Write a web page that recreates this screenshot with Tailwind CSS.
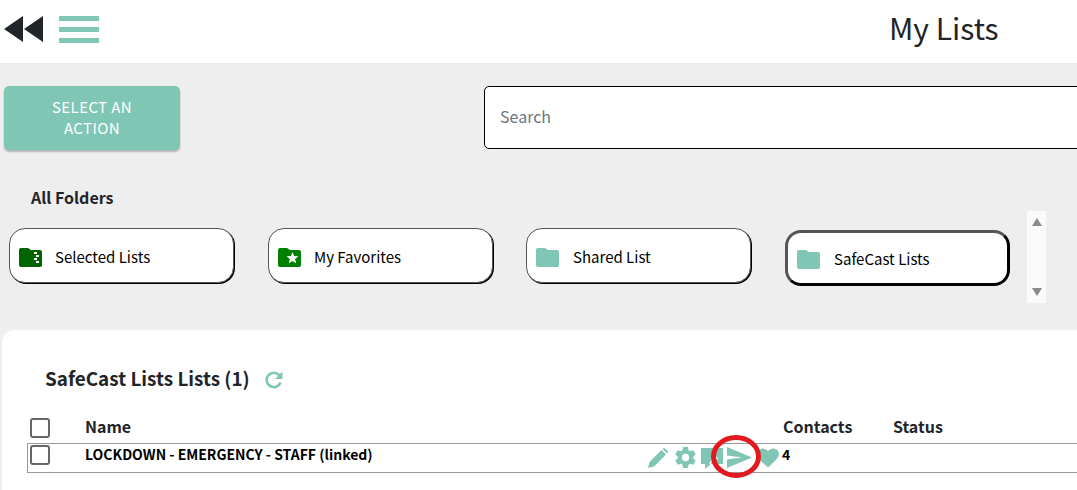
<!DOCTYPE html>
<html lang="en">

<head>
  <meta charset="UTF-8">
  <title>My Lists</title>
  <script src="https://cdn.jsdelivr.net/npm/@tailwindcss/browser@4"></script>
</head>

<body class="bg-[#eeeeee] h-[490px] overflow-hidden font-['Noto_Sans_CJK_SC','Liberation_Sans',sans-serif] text-[#212529]">

  <!-- header -->
  <div class="bg-white h-[63px] flex items-center pl-1 relative">
    <svg width="40" height="28" viewBox="0 0 40 28" class="mt-[-5px]"><path d="M0 14 19 1V27Z M20 14 39 1V27Z" fill="#212529"/></svg>
    <div class="ml-[15px] w-[40px] flex flex-col gap-[6px] mt-[-5px]">
      <div class="h-[5px] bg-[#80c6b5]"></div>
      <div class="h-[5px] bg-[#80c6b5]"></div>
      <div class="h-[5px] bg-[#80c6b5]"></div>
    </div>
    <h1 class="ml-[790px] text-[30px] leading-none mt-[-10px] whitespace-nowrap">My Lists</h1>
  </div>

  <!-- actions + search -->
  <div class="flex pl-1 pt-[23px]">
    <button class="w-[176px] h-[64px] shrink-0 bg-[#80c6b5] rounded-[5px] shadow-[0_2px_2px_rgba(0,0,0,0.25)] text-white text-[15px] leading-[21px] tracking-[0.4px] px-10 pb-[2px]">SELECT AN ACTION</button>
    <div class="ml-[304px] w-[620px] h-[63px] bg-white border border-black rounded-[5px] flex items-center pl-[15px] pb-[3px] text-[16px] text-[#6c757d] shrink-0">Search</div>
  </div>

  <div class="pl-[31px] pt-[35px] font-bold text-[16px] leading-6">All Folders</div>

  <!-- folders -->
  <div class="flex items-start pl-[9px] pt-[15px]">
    <div class="w-[225px] h-[55px] bg-white rounded-[16px] border border-[#555] shadow-[1px_1px_0_#000] flex items-center pl-[9px] pt-[3px] text-[15px] text-black mt-[4px]">
      <svg width="23" height="19" viewBox="0 0 23 19"><path d="M2 0H9L12 2H21A2 2 0 0 1 23 4V17A2 2 0 0 1 21 19H2A2 2 0 0 1 0 17V2A2 2 0 0 1 2 0Z" fill="#006400"/><path d="M15 4h3v2h-3zM17 7h3v2h-3zM15 10h3v2h-3zM17 13h3v2h-3z" fill="#fff"/></svg>
      <span class="ml-[13px]">Selected Lists</span>
    </div>
    <div class="ml-[34px] w-[225px] h-[55px] bg-white rounded-[16px] border border-[#555] shadow-[1px_1px_0_#000] flex items-center pl-[9px] pt-[3px] text-[15px] text-black mt-[4px]">
      <svg width="23" height="19" viewBox="0 0 23 19"><path d="M2 0H9L12 2H21A2 2 0 0 1 23 4V17A2 2 0 0 1 21 19H2A2 2 0 0 1 0 17V2A2 2 0 0 1 2 0Z" fill="#008000"/><path d="M14.500 4 16.100 8 20.400 8.300 17.100 11 18.200 15.200 14.500 12.900 10.800 15.200 11.900 11 8.600 8.300 12.900 8Z" fill="#fff"/></svg>
      <span class="ml-[13px]">My Favorites</span>
    </div>
    <div class="ml-[33px] w-[225px] h-[55px] bg-white rounded-[16px] border border-[#555] shadow-[1px_1px_0_#000] flex items-center pl-[9px] pt-[3px] text-[15px] text-black mt-[4px]">
      <svg width="23" height="19" viewBox="0 0 23 19"><path d="M2 0H9L12 2H21A2 2 0 0 1 23 4V17A2 2 0 0 1 21 19H2A2 2 0 0 1 0 17V2A2 2 0 0 1 2 0Z" fill="#80c6b5"/></svg>
      <span class="ml-[14px]">Shared List</span>
    </div>
    <div class="ml-[34px] w-[225px] h-[56px] bg-white rounded-[16px] border-[3px] border-[#555] border-r-black border-b-black flex items-center pl-[9px] pt-[2px] text-[15px] text-black mt-[6px]">
      <svg width="23" height="19" viewBox="0 0 23 19"><path d="M2 0H9L12 2H21A2 2 0 0 1 23 4V17A2 2 0 0 1 21 19H2A2 2 0 0 1 0 17V2A2 2 0 0 1 2 0Z" fill="#80c6b5"/></svg>
      <span class="ml-[14px]">SafeCast Lists</span>
    </div>
    <div class="ml-[17px] w-[19px] h-[92px] bg-[#fafafa] flex flex-col justify-between items-center py-[7px] mt-[-13px] shrink-0">
      <svg width="10" height="8" viewBox="0 0 10 8"><path d="M5 0 10 8H0Z" fill="#8a8a8a"/></svg>
      <svg width="10" height="8" viewBox="0 0 10 8"><path d="M5 8 10 0H0Z" fill="#8a8a8a"/></svg>
    </div>
  </div>

  <!-- list panel -->
  <div class="bg-white rounded-tl-[12px] ml-[2px] mt-[27px] h-[160px] relative">
    <div class="flex items-center pl-[43px] pt-[33px]">
      <span class="font-bold text-[18.900px] leading-[30px]">SafeCast Lists Lists (1)</span>
      <svg width="20" height="20" viewBox="0 0 20 20" class="ml-[14px] mt-[4px]" fill="none"><path d="M16.500 12.500A7.200 7.200 0 1 1 15 5L17 7" stroke="#80c6b5" stroke-width="2.600"/><path d="M18.500 1.500V9H11Z" fill="#80c6b5"/></svg>
    </div>

    <div class="flex items-center pl-[28px] pt-[22px] h-[46px] font-bold text-[16px]">
      <span class="w-5 h-5 rounded-[3px] border-2 border-[#666] bg-white shrink-0 mt-[1px]"></span>
      <span class="ml-[35px] w-[698px] mt-[-2px]">Name</span>
      <span class="w-[110px] mt-[-2px]">Contacts</span>
      <span class="mt-[-2px]">Status</span>
    </div>

    <div class="ml-[25px] mt-[4px] h-[30px] border border-[#999] border-r-0 flex items-start pl-[2px] pt-[1px] relative">
      <span class="w-5 h-5 rounded-[3px] border-2 border-[#666] bg-white shrink-0"></span>
      <span class="ml-[35px] w-[562px] font-bold text-[14px] leading-5 mt-[-1px] text-black whitespace-nowrap">LOCKDOWN - EMERGENCY - STAFF (linked)</span>
      <div class="flex items-center">
        <svg width="22" height="22" viewBox="0 0 22 22"><path d="M1 21 2.500 15 14.500 3 19 7.500 7 19.500Z M16 1.500 17.500 1 21 4.500 20.500 6 20 6.500 15.500 2Z" fill="#80c6b5"/></svg>
        <svg width="25" height="25" viewBox="0 0 24 24" class="ml-[4px]"><path fill="#80c6b5" d="M12 15.500A3.500 3.500 0 1 1 12 8.500 3.500 3.500 0 0 1 12 15.500ZM19.430 12.980C19.470 12.660 19.500 12.340 19.500 12S19.470 11.340 19.430 11L21.540 9.370C21.730 9.220 21.780 8.950 21.660 8.730L19.660 5.270C19.540 5.050 19.270 4.960 19.050 5.050L16.560 6.050C16.040 5.660 15.500 5.320 14.870 5.070L14.500 2.420C14.460 2.180 14.250 2 14 2H10C9.750 2 9.540 2.180 9.500 2.420L9.130 5.070C8.500 5.320 7.960 5.660 7.440 6.050L4.950 5.050C4.730 4.960 4.460 5.050 4.340 5.270L2.340 8.730C2.210 8.950 2.270 9.220 2.460 9.370L4.570 11C4.530 11.340 4.500 11.670 4.500 12S4.530 12.660 4.570 12.980L2.460 14.630C2.270 14.780 2.210 15.050 2.340 15.270L4.340 18.730C4.460 18.950 4.730 19.030 4.950 18.950L7.440 17.940C7.960 18.340 8.500 18.680 9.130 18.930L9.500 21.580C9.540 21.820 9.750 22 10 22H14C14.250 22 14.460 21.820 14.500 21.580L14.870 18.930C15.500 18.670 16.040 18.340 16.560 17.940L19.050 18.950C19.270 19.030 19.540 18.950 19.660 18.730L21.660 15.270C21.780 15.050 21.730 14.780 21.540 14.630Z"/></svg>
        <svg width="24" height="22" viewBox="0 0 24 22" class="ml-[2px]"><path d="M1 1H23V17H11L5 22V17H1Z" fill="#80c6b5"/><path d="M10 17 14 9 18 12" fill="none" stroke="#fff" stroke-width="1.500"/></svg>
        <svg width="25" height="21" viewBox="0 0 25 21" class="ml-[3px]"><path d="M0 0 25 10.500 0 21 0 12.500 15 10.500 0 8.500Z" fill="#80c6b5"/></svg>
        <svg width="22" height="20" viewBox="0 0 24 22" class="ml-[5px]"><path fill="#80c6b5" d="M12 21.400 10.300 19.800C4.200 14.300 0 10.500 0 6.500 0 3 2.700.5 6.200.5 8.200.5 10.600 1.500 12 3.500 13.400 1.500 15.800.5 17.800.5 21.300.5 24 3 24 6.500 24 10.500 19.800 14.300 13.700 19.800Z"/></svg>
        <span class="ml-[3px] font-bold text-[14px] text-black leading-5 self-start mt-[-1px]">4</span>
      </div>
      <svg width="54" height="47" viewBox="0 0 54 47" class="absolute left-[681px] top-[-11px]"><ellipse cx="27" cy="23.500" rx="22.500" ry="19" fill="none" stroke="#e21a1f" stroke-width="5"/></svg>
    </div>
  </div>

</body>

</html>
